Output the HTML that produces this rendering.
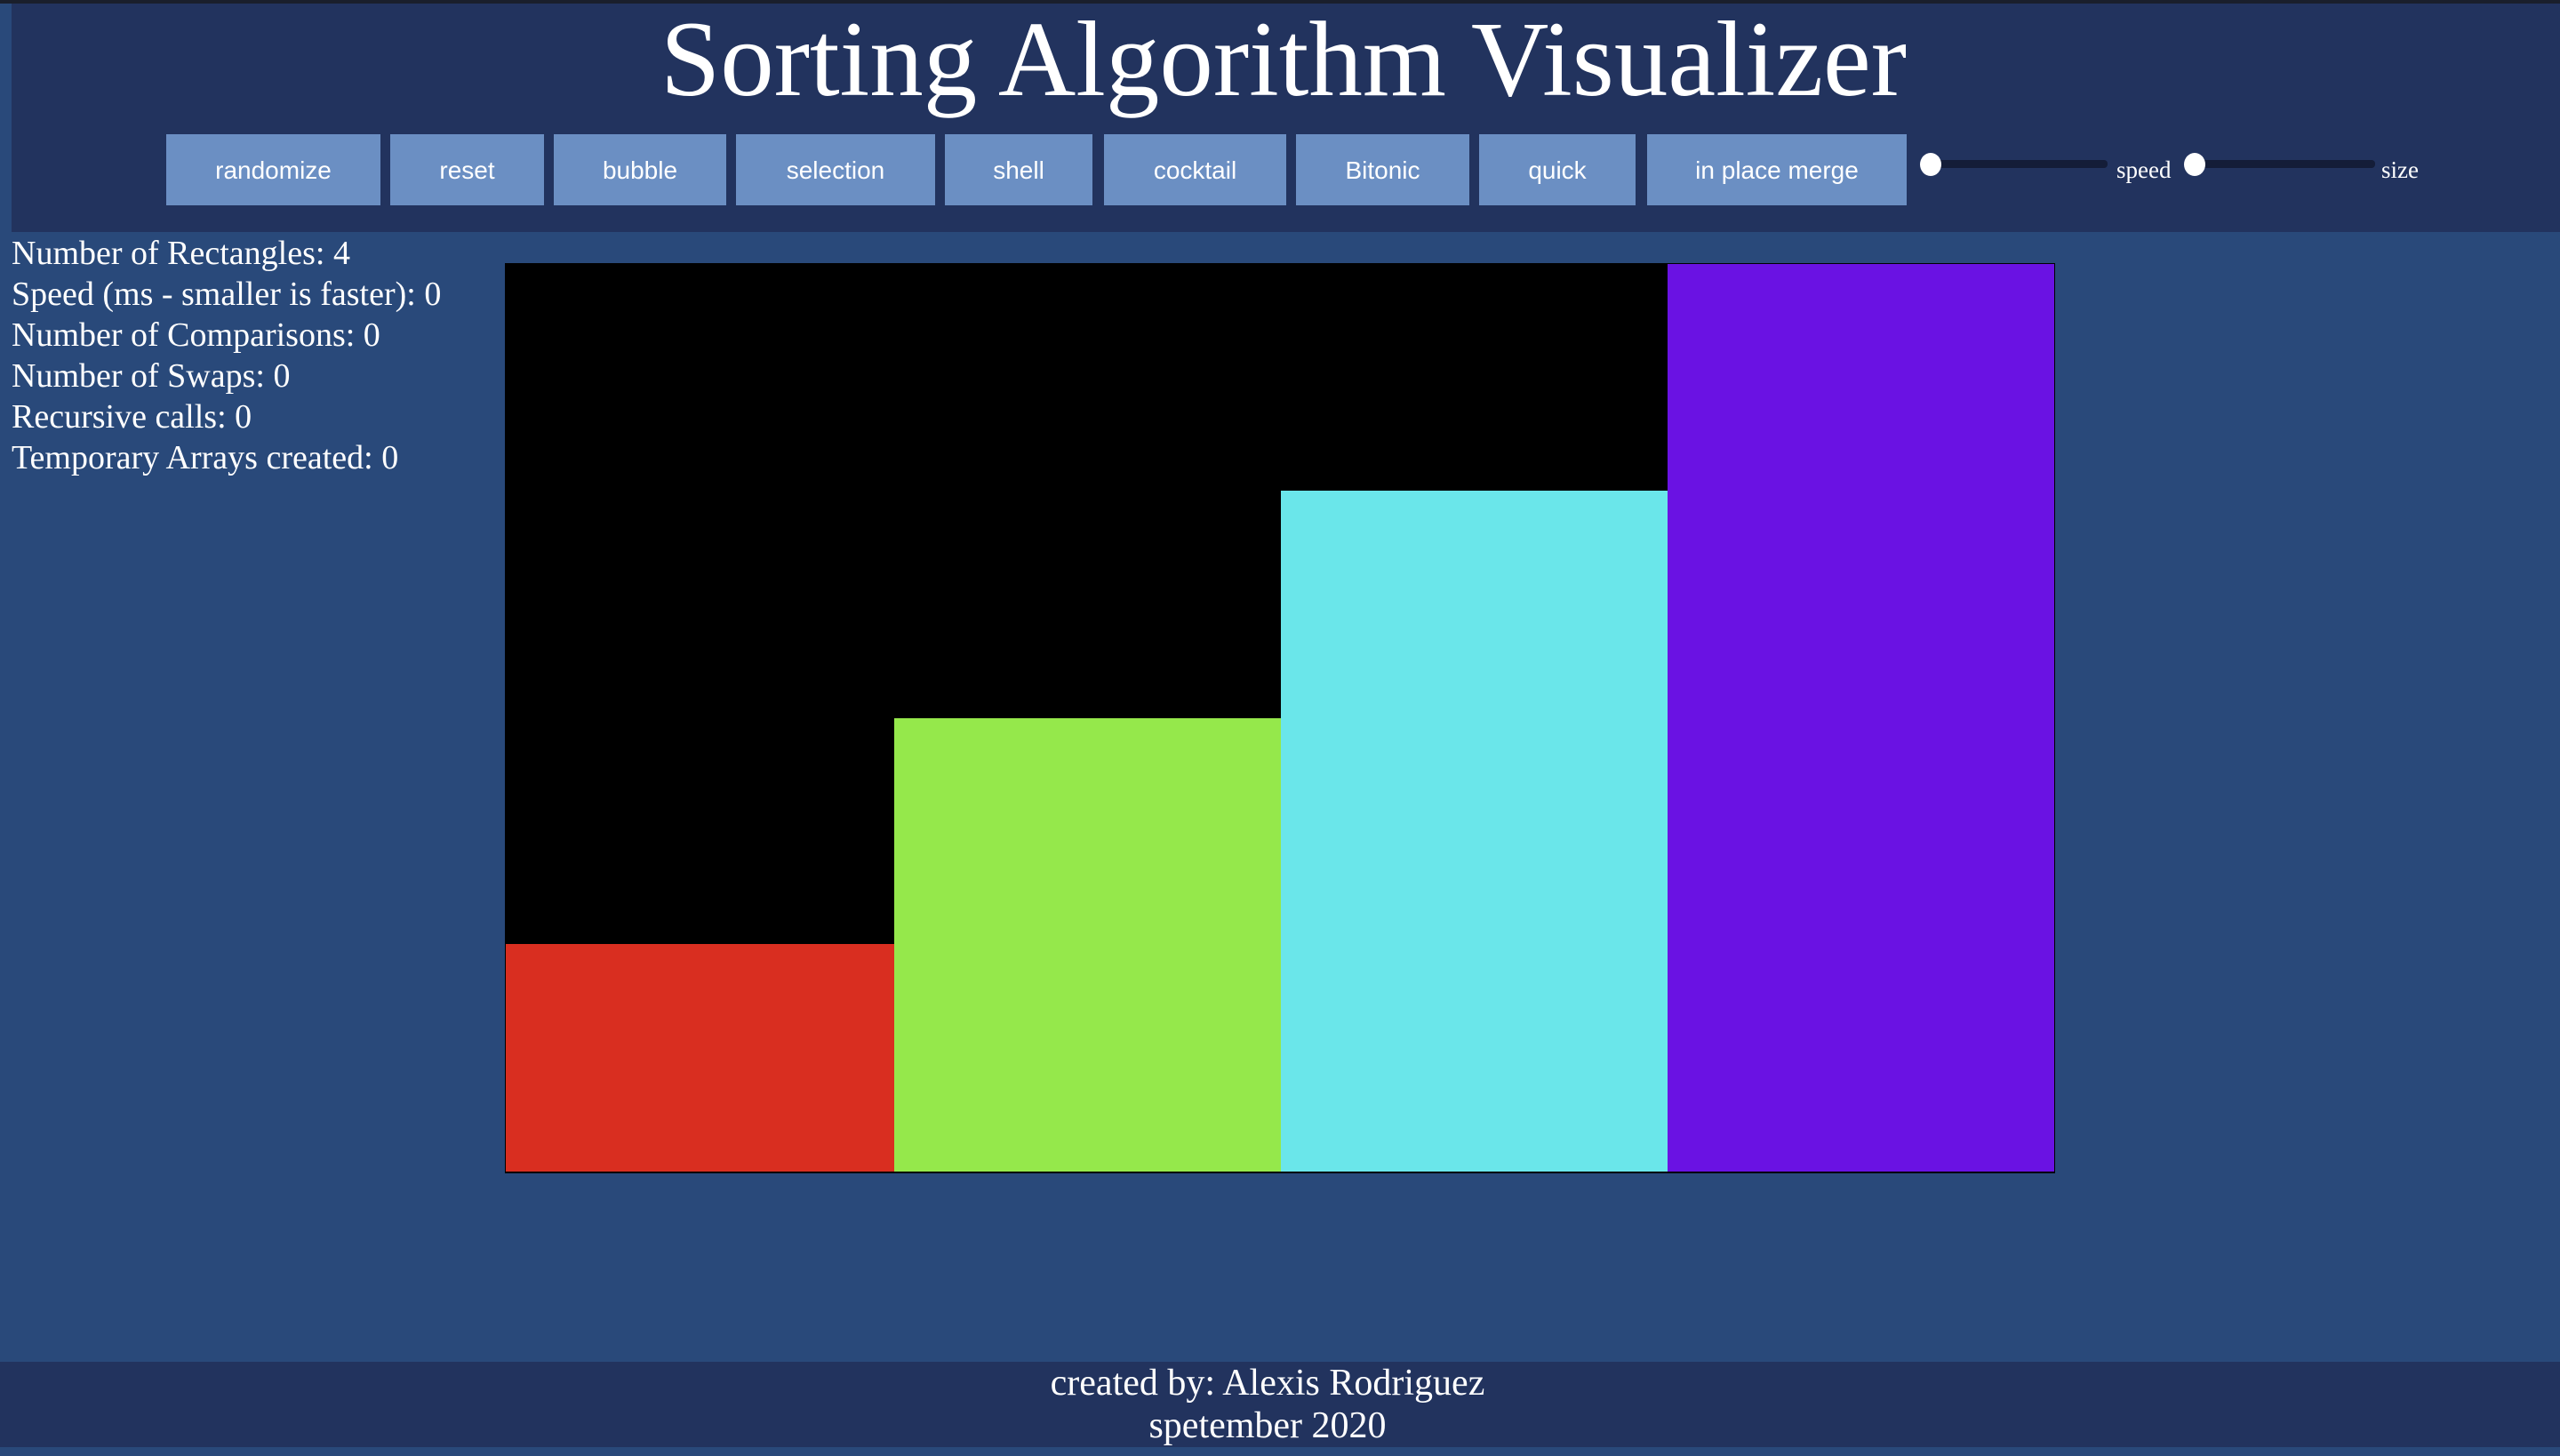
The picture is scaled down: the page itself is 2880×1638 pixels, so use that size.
<!DOCTYPE html>
<html><head><meta charset="utf-8"><style>
*{margin:0;padding:0;box-sizing:border-box}
body{width:2880px;height:1638px;background:#29497a;position:relative;overflow:hidden;font-family:"Liberation Serif",serif;color:#fff}
.hdr{position:absolute;left:13px;top:4px;width:2867px;height:257px;background:#22335e}
.topb{position:absolute;left:0;top:0;width:2880px;height:4px;background:#1a1f2c}
h1{position:absolute;left:4px;top:2px;width:2880px;text-align:center;font-weight:normal;font-size:121px;line-height:130px}
.b{position:absolute;top:151px;height:80px;background:#6b8fc3;font-family:"Liberation Sans",sans-serif;font-size:28px;display:flex;align-items:center;justify-content:center;color:#fff;padding-top:2px}
.tr{position:absolute;top:180px;height:9px;border-radius:4px;background:#141d38}
.th{position:absolute;top:172px;width:24px;height:26px;border-radius:50%;background:#fff}
.lbl{position:absolute;top:176px;font-size:27px}
.st{position:absolute;left:13px;top:262px;font-size:38px;line-height:46px}
.cv{position:absolute;left:568px;top:296px;width:1744px;height:1024px;background:#000;border:1px solid #000}
.bar{position:absolute;bottom:1px}
.ft{position:absolute;left:-14px;top:1532px;width:2880px;height:96px;background:#22335e;text-align:center;font-size:42px;line-height:48px}
.ftbg{position:absolute;left:0;top:1532px;width:2880px;height:96px;background:#22335e}
</style></head><body>
<div class="topb"></div>
<div class="hdr"></div>
<h1>Sorting Algorithm Visualizer</h1>
<div class="b" style="left:187px;width:241px">randomize</div>
<div class="b" style="left:439px;width:173px">reset</div>
<div class="b" style="left:623px;width:194px">bubble</div>
<div class="b" style="left:828px;width:224px">selection</div>
<div class="b" style="left:1063px;width:166px">shell</div>
<div class="b" style="left:1242px;width:205px">cocktail</div>
<div class="b" style="left:1458px;width:195px">Bitonic</div>
<div class="b" style="left:1664px;width:176px">quick</div>
<div class="b" style="left:1853px;width:292px">in place merge</div>
<div class="tr" style="left:2175px;width:196px"></div>
<div class="th" style="left:2160px"></div>
<div class="lbl" style="left:2381px">speed</div>
<div class="tr" style="left:2472px;width:200px"></div>
<div class="th" style="left:2457px"></div>
<div class="lbl" style="left:2679px">size</div>
<div class="st">Number of Rectangles: 4<br>Speed (ms - smaller is faster): 0<br>Number of Comparisons: 0<br>Number of Swaps: 0<br>Recursive calls: 0<br>Temporary Arrays created: 0</div>
<div class="cv">
<div class="bar" style="left:0;width:437px;height:256px;background:#d92e20"></div>
<div class="bar" style="left:437px;width:435px;height:510px;background:#95e84b"></div>
<div class="bar" style="left:872px;width:435px;height:766px;background:#6ae6ea"></div>
<div class="bar" style="left:1307px;width:435px;height:1021px;background:#6a12e3"></div>
</div>
<div class="ftbg"></div>
<div class="ft">created by: Alexis Rodriguez<br>spetember 2020</div>
</body></html>
